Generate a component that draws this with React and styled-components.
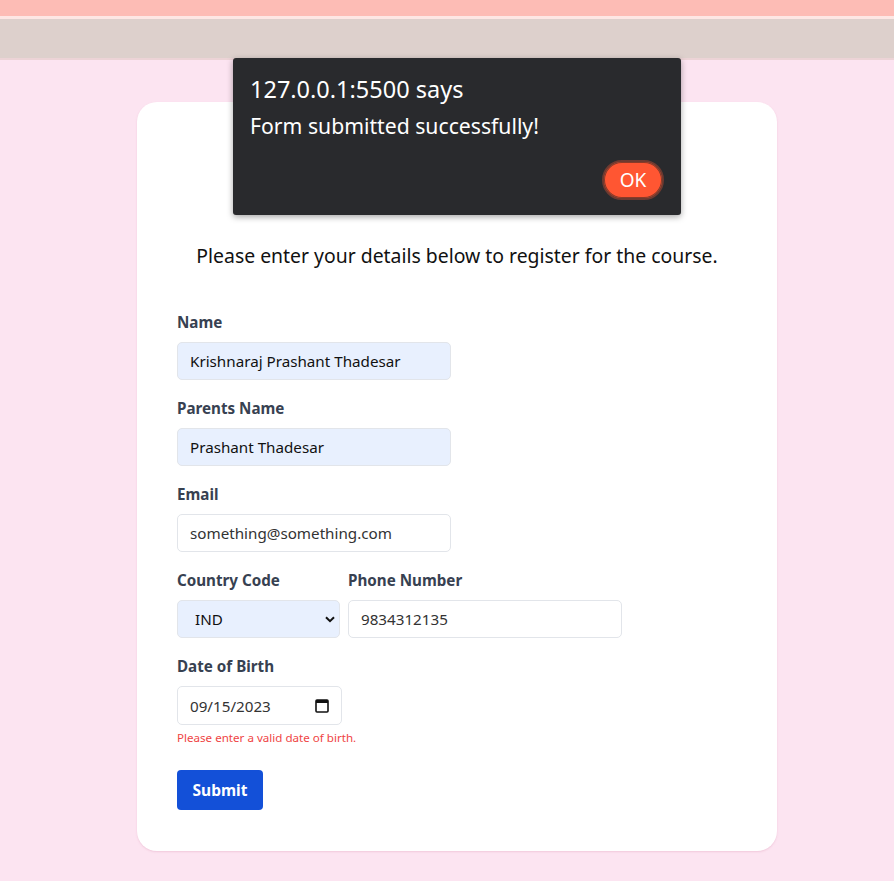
import React from "react";
import styled, { createGlobalStyle } from "styled-components";

const GlobalStyle = createGlobalStyle`
  html, body {
    margin: 0;
    padding: 0;
    background: #fce4f1;
    font-family: "Noto Sans", "Open Sans", sans-serif;
  }
`;

const Page = styled.div`
  position: relative;
  min-height: 881px;
  display: flex;
  flex-direction: column;
`;

const TopBar = styled.div`
  height: 16px;
  background: #fdbcb5;
  border-bottom: 3px solid #fde7e4;
`;

const SubBar = styled.div`
  height: 39px;
  background: #ddd0cc;
  border-bottom: 2px solid #ecd3d6;
`;

const Main = styled.main`
  display: flex;
  justify-content: center;
  padding: 42px 0 0 20px;
`;

const Card = styled.div`
  width: 640px;
  box-sizing: border-box;
  background: #fff;
  border-radius: 20px;
  box-shadow: 0 1px 2px rgba(220, 150, 180, 0.35);
  padding: 40px 40px 41px;
`;

const Heading = styled.h1`
  margin: 0;
  height: 100px;
  display: flex;
  align-items: center;
  justify-content: center;
  font-size: 28px;
  color: #1f2937;
`;

const Intro = styled.p`
  margin: 0 0 42px;
  text-align: center;
  font-size: 19.4px;
  color: #111;
`;

const Group = styled.div`
  display: flex;
  flex-direction: column;
  margin-bottom: ${(p) => (p.$last ? 0 : 17)}px;
`;

const Row = styled.div`
  display: flex;
  gap: 8px;
`;

const Label = styled.label`
  font-size: 15.2px;
  font-weight: 700;
  color: #374151;
  line-height: 22px;
  margin-bottom: 9px;
`;

const Field = styled.div`
  width: ${(p) => p.$w}px;
  height: ${(p) => p.$h || 38}px;
  box-sizing: border-box;
  border: 1px solid #e2e5ea;
  border-radius: 5px;
  background: ${(p) => (p.$filled ? "#e8f0fe" : "#fff")};
  display: flex;
  align-items: center;
  justify-content: space-between;
  padding: 0 ${(p) => p.$pr || 12}px 0 ${(p) => p.$pl || 12}px;
  font-size: 15.2px;
  color: ${(p) => (p.$dark ? "#111" : "#333")};
`;

const ErrorText = styled.div`
  color: #ef4444;
  font-size: 11.6px;
  margin-top: 5px;
`;

const SubmitButton = styled.button`
  margin-top: 25px;
  width: 86px;
  height: 40px;
  border: none;
  border-radius: 4px;
  background: #1350d8;
  color: #fff;
  font-family: inherit;
  font-weight: 700;
  font-size: 15.5px;
`;

const Dialog = styled.div`
  position: absolute;
  left: 233px;
  top: 58px;
  width: 448px;
  height: 157px;
  box-sizing: border-box;
  background: #292a2d;
  border-radius: 3px;
  box-shadow: 0 2px 6px rgba(0, 0, 0, 0.35);
  padding: 14px 17px 15px 17px;
  display: flex;
  flex-direction: column;
  color: #fff;
`;

const DialogTitle = styled.div`
  font-size: 23.5px;
  line-height: 34px;
`;

const DialogMessage = styled.div`
  font-size: 21.2px;
  line-height: 30px;
  margin-top: 5px;
`;

const DialogActions = styled.div`
  margin-top: auto;
  display: flex;
  justify-content: flex-end;
`;

const OkButton = styled.button`
  width: 62px;
  height: 40px;
  box-sizing: border-box;
  border-radius: 20px;
  border: 2px solid #6e3a30;
  background: #ff5632;
  box-shadow: inset 0 0 0 1px #8a3a28;
  color: #fff;
  font-family: "Noto Sans", sans-serif;
  font-size: 19px;
`;

const Chevron = () => (
  <svg width="10" height="7" viewBox="0 0 10 7">
    <path d="M1 1.2 L5 5.2 L9 1.2" fill="none" stroke="#111" strokeWidth="2" />
  </svg>
);

const CalendarIcon = () => (
  <svg width="14" height="15" viewBox="0 0 14 15">
    <rect x="1" y="2" width="12" height="12" rx="1" fill="none" stroke="#111" strokeWidth="1.6" />
    <rect x="1" y="2" width="12" height="3" fill="#111" />
  </svg>
);

export default function App() {
  return (
    <Page>
      <GlobalStyle />
      <TopBar />
      <SubBar />
      <Main>
        <Card>
          <Heading>Course Registration</Heading>
          <Intro>Please enter your details below to register for the course.</Intro>
          <Group>
            <Label>Name</Label>
            <Field $w={274} $filled $dark>Krishnaraj Prashant Thadesar</Field>
          </Group>
          <Group>
            <Label>Parents Name</Label>
            <Field $w={274} $filled $dark>Prashant Thadesar</Field>
          </Group>
          <Group>
            <Label>Email</Label>
            <Field $w={274}>something@something.com</Field>
          </Group>
          <Row>
            <Group>
              <Label>Country Code</Label>
              <Field $w={163} $filled $dark $pl={17} $pr={4}>
                IND <Chevron />
              </Field>
            </Group>
            <Group>
              <Label>Phone Number</Label>
              <Field $w={274}>9834312135</Field>
            </Group>
          </Row>
          <Group $last>
            <Label>Date of Birth</Label>
            <Field $w={165} $h={39}>
              09/15/2023 <CalendarIcon />
            </Field>
            <ErrorText>Please enter a valid date of birth.</ErrorText>
          </Group>
          <SubmitButton>Submit</SubmitButton>
        </Card>
      </Main>
      <Dialog>
        <DialogTitle>127.0.0.1:5500 says</DialogTitle>
        <DialogMessage>Form submitted successfully!</DialogMessage>
        <DialogActions>
          <OkButton>OK</OkButton>
        </DialogActions>
      </Dialog>
    </Page>
  );
}
